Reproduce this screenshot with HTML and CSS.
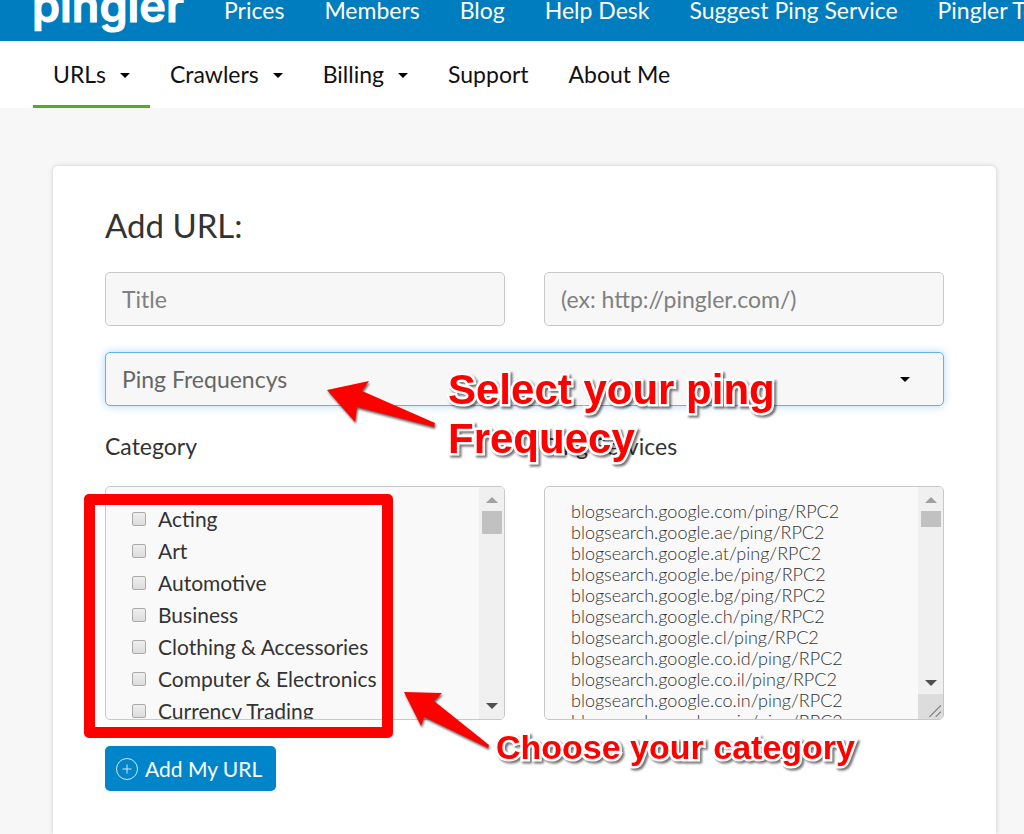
FILE: index.html
```html
<!DOCTYPE html>
<html lang="en">
<head>
    <meta charset="UTF-8">
    <meta name="viewport" content="width=device-width, initial-scale=1.0">
    <title>Pingler - Add URL</title>
    <link rel="stylesheet" href="styles.css">
</head>
<body>
    <header class="top-bar">
        <a class="logo" href="#">pingler</a>
        <nav class="top-nav">
            <a href="#">Prices</a>
            <a href="#">Members</a>
            <a href="#">Blog</a>
            <a href="#">Help Desk</a>
            <a href="#">Suggest Ping Service</a>
            <a href="#">Pingler Tools</a>
        </nav>
    </header>

    <nav class="sub-nav">
        <a class="active" href="#">URLs <span class="caret"></span></a>
        <a href="#">Crawlers <span class="caret"></span></a>
        <a href="#">Billing <span class="caret"></span></a>
        <a href="#">Support</a>
        <a href="#">About Me</a>
    </nav>

    <main class="card">
        <h1>Add URL:</h1>
        <form>
            <div class="form-row">
                <input class="field" type="text" placeholder="Title" aria-label="Title">
                <input class="field" type="text" placeholder="(ex: http://pingler.com/)" aria-label="URL">
            </div>

            <div class="select-wrap">
                <select class="field focused" aria-label="Ping frequency">
                    <option>Ping Frequencys</option>
                </select>
                <span class="caret"></span>
            </div>

            <div class="form-row lists">
                <div>
                    <h2 id="category-label">Category</h2>
                    <div class="list-box" role="group" aria-labelledby="category-label">
                        <div class="categories">
                            <label><input type="checkbox"> Acting</label>
                            <label><input type="checkbox"> Art</label>
                            <label><input type="checkbox"> Automotive</label>
                            <label><input type="checkbox"> Business</label>
                            <label><input type="checkbox"> Clothing &amp; Accessories</label>
                            <label><input type="checkbox"> Computer &amp; Electronics</label>
                            <label><input type="checkbox"> Currency Trading</label>
                        </div>
                        <div class="scrollbar">
                            <span class="arrow-up"></span>
                            <span class="thumb"></span>
                            <span class="arrow-down"></span>
                        </div>
                    </div>
                </div>
                <div>
                    <label class="list-label" for="services">Ping Services</label>
                    <div class="list-box">
                        <textarea id="services">blogsearch.google.com/ping/RPC2
blogsearch.google.ae/ping/RPC2
blogsearch.google.at/ping/RPC2
blogsearch.google.be/ping/RPC2
blogsearch.google.bg/ping/RPC2
blogsearch.google.ch/ping/RPC2
blogsearch.google.cl/ping/RPC2
blogsearch.google.co.id/ping/RPC2
blogsearch.google.co.il/ping/RPC2
blogsearch.google.co.in/ping/RPC2
blogsearch.google.co.jp/ping/RPC2</textarea>
                        <div class="scrollbar resizable">
                            <span class="arrow-up"></span>
                            <span class="thumb short"></span>
                            <span class="arrow-down"></span>
                            <svg class="resizer" viewBox="0 0 24 24">
                                <path d="M11 22 L22 11 M17 22 L22 17" fill="none" stroke="#777"/>
                            </svg>
                        </div>
                    </div>
                </div>
            </div>

            <button class="submit" type="button">
                <svg viewBox="0 0 24 24" width="24" height="24">
                    <circle cx="12" cy="12" r="10.5"/>
                    <path d="M12 7.5 V16.5 M7.5 12 H16.5"/>
                </svg>
                Add My URL
            </button>
        </form>
    </main>

    <!-- Tutorial annotations -->
    <div class="highlight"></div>
    <svg class="arrow arrow-frequency" viewBox="0 0 110 50" width="110" height="50">
        <path d="M1 10 L43 1 L36 11 L109 43 L108 47 L31 27 L29 42 Z"/>
    </svg>
    <svg class="arrow arrow-category" viewBox="0 0 88 60" width="88" height="60">
        <path d="M1 1 L39 2 L31 10 L86 54 L85 57 L21 26 L18 35 Z"/>
    </svg>
    <p class="note note-frequency">Select your ping<br>Frequecy</p>
    <p class="note note-category">Choose your category</p>
</body>
</html>
```
FILE: styles.css
```css
* {
    box-sizing: border-box;
    margin: 0;
    padding: 0;
}

body {
    position: relative;
    min-height: 100vh;
    display: flex;
    flex-direction: column;
    font-family: Lato, sans-serif;
    font-size: 23px;
    color: #333;
    background: #f7f7f7;
    overflow: hidden;
}

a {
    color: inherit;
    text-decoration: none;
    white-space: nowrap;
}

/* Top bar */
.top-bar {
    display: flex;
    align-items: flex-end;
    height: 41px;
    padding: 0 0 9px 32px;
    background: #007dbe;
    color: #fff;
    overflow: hidden;
}

.logo {
    width: 192px;
    flex-shrink: 0;
    font-family: Inter, sans-serif;
    font-size: 45px;
    font-weight: 600;
    line-height: 52px;
    -webkit-text-stroke: 1px #fff;
    stroke-linejoin: round;
}

.top-nav {
    display: flex;
    gap: 40px;
    line-height: 44px;
}

/* Second menu */
.sub-nav {
    display: flex;
    height: 67px;
    padding-left: 33px;
    background: #fff;
    color: #111;
}

.sub-nav a {
    display: flex;
    align-items: center;
    gap: 14px;
    padding: 2px 20px 0;
    border-bottom: 3px solid transparent;
}

.sub-nav .active {
    border-color: #55ab26;
}

.caret {
    border: 5px solid transparent;
    border-top-color: #000;
    border-bottom: none;
}

.sub-nav .caret {
    margin-top: 2px;
}

/* Form */
.card {
    flex: 1;
    margin: 58px 28px 0 53px;
    padding: 36px 52px;
    background: #fff;
    border-radius: 5px 5px 0 0;
    box-shadow: 0 0 5px rgba(0, 0, 0, 0.18);
}

h1 {
    margin-bottom: 24px;
    font-size: 33px;
    font-weight: normal;
    line-height: 46px;
}

.form-row {
    display: grid;
    grid-template-columns: 1fr 1fr;
    gap: 39px;
}

.field {
    width: 100%;
    height: 54px;
    padding: 0 16px;
    border: 1px solid #c8c8c8;
    border-radius: 5px;
    background: #f7f7f7;
    color: #666;
    font: inherit;
    outline: none;
    appearance: none;
}

.field::placeholder {
    color: #808080;
}

.field.focused {
    border-color: #66afe9;
    box-shadow: 0 0 8px rgba(102, 175, 233, 0.5);
}

.select-wrap {
    display: grid;
    align-items: center;
    margin-top: 26px;
}

.select-wrap > * {
    grid-area: 1 / 1;
}

.select-wrap .caret {
    justify-self: end;
    margin-right: 34px;
    pointer-events: none;
}

.lists {
    margin-top: 24px;
}

h2,
.list-label {
    display: block;
    margin-bottom: 24px;
    font-size: 23px;
    font-weight: normal;
    line-height: 32px;
}

.list-box {
    display: flex;
    height: 234px;
    border: 1px solid #c8c8c8;
    border-radius: 5px;
    background: #f9f9f9;
    overflow: hidden;
}

.categories {
    flex: 1;
    padding: 15px 26px;
}

.categories label {
    display: flex;
    align-items: center;
    gap: 12px;
    height: 32px;
    font-size: 21px;
    white-space: nowrap;
}

.categories input {
    width: 14px;
    height: 14px;
    margin-top: 2px;
    border: 1px solid #aaa;
    border-radius: 2px;
    background: linear-gradient(#eee, #dcdcdc);
    appearance: none;
}

textarea {
    flex: 1;
    min-width: 0;
    padding: 14px 26px 0;
    border: none;
    background: transparent;
    color: #333;
    font-family: inherit;
    font-size: 18px;
    font-weight: 300;
    line-height: 21px;
    overflow: hidden;
    resize: none;
    outline: none;
}

.scrollbar {
    display: flex;
    flex-direction: column;
    align-items: center;
    width: 25px;
    padding: 10px 0;
    background: #f0f0f0;
}

.scrollbar.resizable {
    padding-bottom: 0;
}

.arrow-up,
.arrow-down {
    border: 6px solid transparent;
}

.arrow-up {
    border-top: none;
    border-bottom-color: #a0a0a0;
}

.arrow-down {
    margin-top: auto;
    border-bottom: none;
    border-top-color: #505050;
}

.thumb {
    width: 20px;
    height: 23px;
    margin-top: 8px;
    background: #c1c1c1;
}

.thumb.short {
    height: 16px;
}

.resizer {
    width: 25px;
    height: 25px;
    margin-top: 8px;
    background: #dcdcdc;
}

.submit {
    display: flex;
    align-items: center;
    gap: 6px;
    height: 45px;
    margin-top: 26px;
    padding: 0 14px 0 10px;
    border: none;
    border-radius: 5px;
    background: #0085ca;
    color: #fff;
    font-family: inherit;
    font-size: 21px;
    cursor: pointer;
}

.submit svg {
    fill: none;
    stroke: #cfe8f6;
}

/* Tutorial annotations */
.highlight {
    position: absolute;
    left: 84px;
    top: 494px;
    width: 309px;
    height: 244px;
    border: 11px solid #f00;
    border-radius: 5px;
    pointer-events: none;
}

.arrow {
    position: absolute;
    fill: #f00;
    overflow: visible;
    filter: drop-shadow(1px 2px 1px rgba(0, 0, 0, 0.6));
    pointer-events: none;
}

.arrow-frequency {
    left: 326px;
    top: 380px;
}

.arrow-category {
    left: 403px;
    top: 691px;
}

.note {
    position: absolute;
    color: #f00;
    font-family: "Liberation Sans", Arial, sans-serif;
    font-weight: bold;
    white-space: nowrap;
    -webkit-text-stroke: 5px #fff;
    paint-order: stroke fill;
    filter: drop-shadow(2px 2px 1px rgba(0, 0, 0, 0.55));
    pointer-events: none;
}

.note-frequency {
    left: 448px;
    top: 365px;
    font-size: 42px;
    line-height: 49px;
}

.note-category {
    left: 496px;
    top: 727px;
    font-size: 34px;
    line-height: 40px;
}
```
